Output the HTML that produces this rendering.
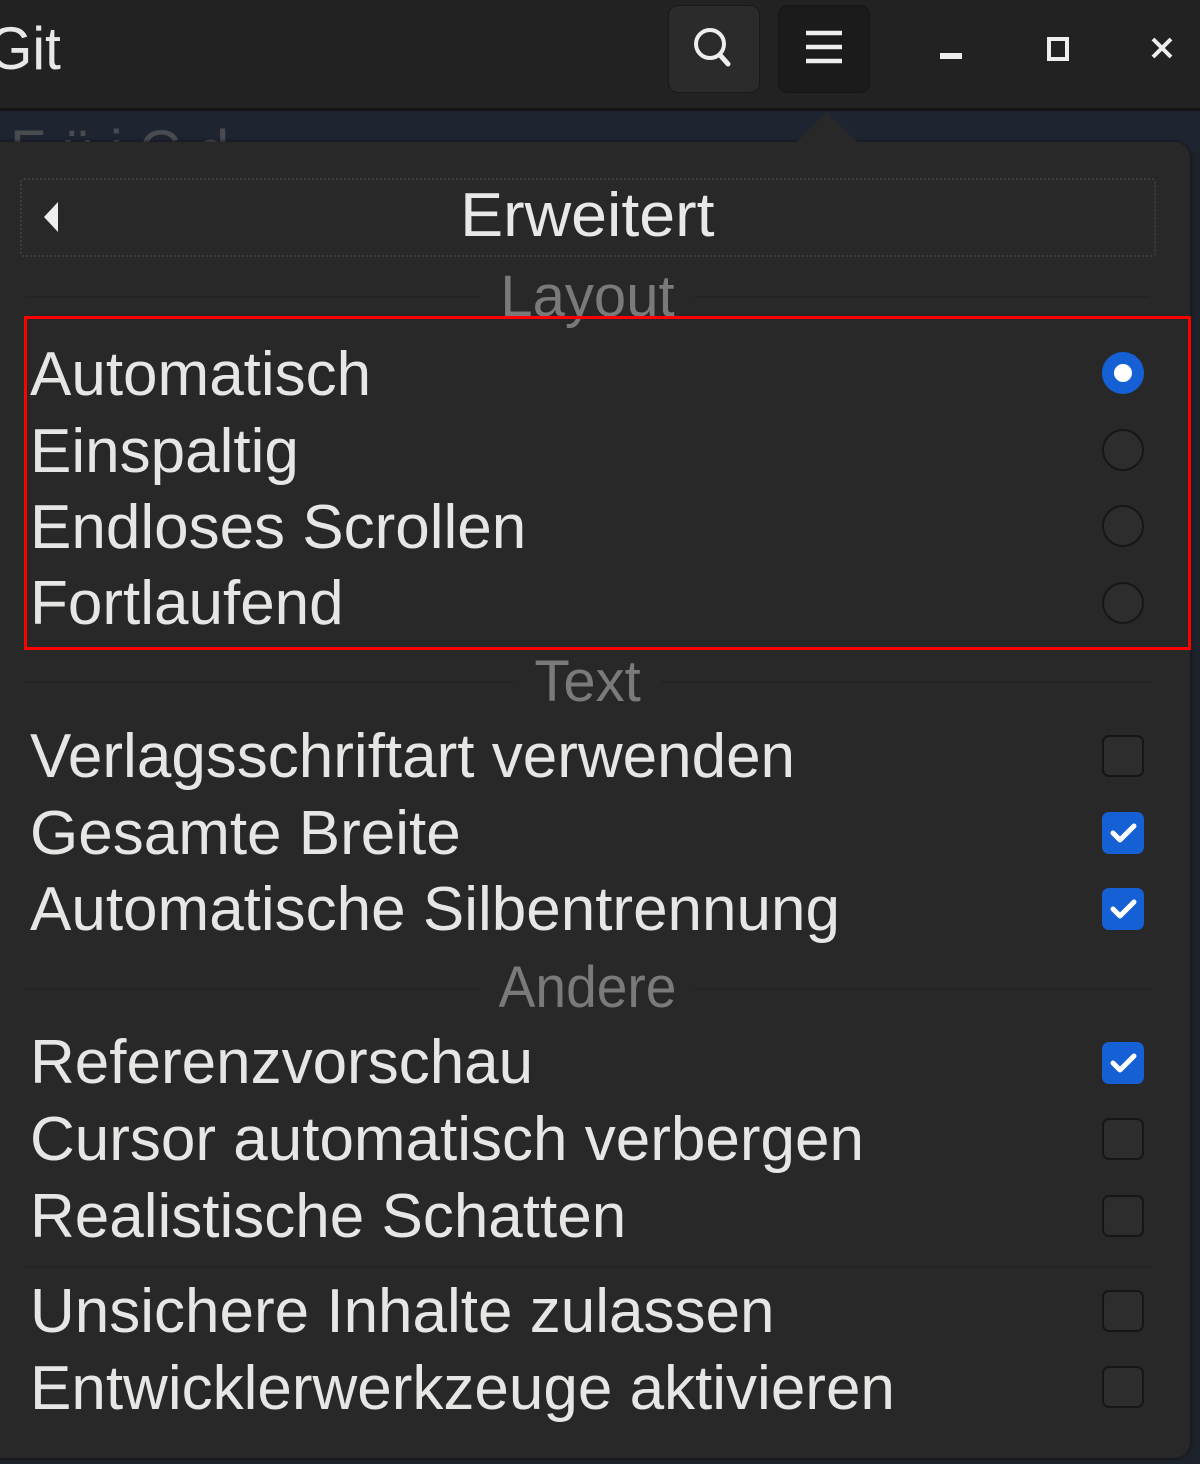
<!DOCTYPE html>
<html><head><meta charset="utf-8"><style>
html,body{margin:0;padding:0}
body{width:1200px;height:1464px;position:relative;overflow:hidden;background:#1e222b;font-family:"Liberation Sans","DejaVu Sans",sans-serif;color:#e6e6e4}
.tb{position:absolute;left:0;top:0;width:1200px;height:108px;background:#222222;border-bottom:3px solid #141414}
.bg2{position:absolute;left:0;top:111px;width:1200px;height:40px;background:#1f2431;overflow:hidden}
.pop{position:absolute;left:0;top:142px;width:1190px;height:1316px;background:#282828;border-radius:0 16px 16px 0;box-shadow:0 0 4px #111}
.arrow{position:absolute;left:795px;top:112px;width:0;height:0;border-left:32px solid transparent;border-right:32px solid transparent;border-bottom:32px solid #282828}
.lbl{position:absolute;left:30px;font-size:62px;line-height:70px;white-space:nowrap}
.sec{position:absolute;left:0;width:1175px;text-align:center;font-size:58px;line-height:70px;color:#7a7a7a}
.sec span{display:inline-block}
.line{position:absolute;left:25px;width:1125px;height:2px;background:#232323}
.rad{position:absolute;left:1102px;width:38px;height:38px;border-radius:50%;border:2px solid #161616;background:#2d2d2d}
.chk{position:absolute;left:1102px;width:38px;height:38px;border-radius:7px;border:2px solid #161616;background:#2d2d2d}
.on{background:#1560d4;border-color:#1560d4}
.btn{position:absolute;top:5px;width:90px;height:86px;border-radius:10px}
</style></head><body>
<div class="tb"></div>
<div style="position:absolute;left:-12px;top:14px;font-size:60px;color:#e8e8e8;transform:scaleX(0.95);transform-origin:left">Git</div>
<div class="btn" style="left:668px;background:#2b2b2b;border:1px solid #1a1a1a"></div>
<div class="btn" style="left:778px;background:#1b1b1b;border:1px solid #151515"></div>
<svg style="position:absolute;left:690px;top:24px" width="44" height="46"><circle cx="20" cy="20" r="14" fill="none" stroke="#eee" stroke-width="4"/><path d="M30 31 L38 40" stroke="#eee" stroke-width="5" stroke-linecap="round"/></svg>
<svg style="position:absolute;left:804px;top:28px" width="40" height="40"><path d="M2 5H38M2 19H38M2 33H38" stroke="#eee" stroke-width="4.5"/></svg>
<div style="position:absolute;left:940px;top:53px;width:22px;height:6px;background:#eee"></div>
<div style="position:absolute;left:1047px;top:37px;width:14px;height:16px;border:4px solid #eee;box-sizing:content-box"></div>
<svg style="position:absolute;left:1150px;top:36px" width="24" height="24"><path d="M3 3L21 21M21 3L3 21" stroke="#eee" stroke-width="4"/></svg>
<div class="bg2"><div style="position:absolute;left:10px;top:7px;font-size:58px;color:#666;opacity:.6;white-space:nowrap">F ü i C d</div></div>
<div class="pop"></div>
<div class="arrow"></div>
<div style="position:absolute;left:20px;top:178px;width:1132px;height:75px;border:2px dotted #3c3c3c;border-radius:4px"></div>
<svg style="position:absolute;left:40px;top:200px" width="20" height="34"><path d="M18 2L4 17L18 32Z" fill="#eee"/></svg>
<div class="sec" style="top:181px;color:#e8e8e8;font-size:62px"><span style="transform:scaleX(1.04)">Erweitert</span></div>
<div class="line" style="top:296px"></div>
<div class="sec" style="top:262px;"><span style="background:#282828;padding:0 20px">Layout</span></div>
<div class="lbl" style="top:340px">Automatisch</div>
<div class="lbl" style="top:417px">Einspaltig</div>
<div class="lbl" style="top:493px">Endloses Scrollen</div>
<div class="lbl" style="top:569px">Fortlaufend</div>
<div class="rad on" style="top:352px"><div style="position:absolute;left:10px;top:10px;width:18px;height:18px;border-radius:50%;background:#fff"></div></div>
<div class="rad" style="top:429px"></div>
<div class="rad" style="top:505px"></div>
<div class="rad" style="top:582px"></div>
<div class="line" style="top:681px"></div>
<div class="sec" style="top:647px"><span style="background:#282828;padding:0 20px">Text</span></div>
<div style="position:absolute;left:24px;top:316px;width:1161px;height:328px;border:3px solid #f00"></div>
<div class="lbl" style="top:722px">Verlagsschriftart verwenden</div>
<div class="lbl" style="top:799px">Gesamte Breite</div>
<div class="lbl" style="top:875px">Automatische Silbentrennung</div>
<div class="chk" style="top:735px"></div>
<div class="chk on" style="top:812px"><svg width="38" height="38"><path d="M9 19L16 26L30 12" fill="none" stroke="#fff" stroke-width="5" stroke-linecap="round" stroke-linejoin="round"/></svg></div>
<div class="chk on" style="top:888px"><svg width="38" height="38"><path d="M9 19L16 26L30 12" fill="none" stroke="#fff" stroke-width="5" stroke-linecap="round" stroke-linejoin="round"/></svg></div>
<div class="line" style="top:988px"></div>
<div class="sec" style="top:953px"><span style="background:#282828;padding:0 20px;transform:scaleX(0.95)">Andere</span></div>
<div class="lbl" style="top:1028px">Referenzvorschau</div>
<div class="lbl" style="top:1105px">Cursor automatisch verbergen</div>
<div class="lbl" style="top:1182px">Realistische Schatten</div>
<div class="chk on" style="top:1042px"><svg width="38" height="38"><path d="M9 19L16 26L30 12" fill="none" stroke="#fff" stroke-width="5" stroke-linecap="round" stroke-linejoin="round"/></svg></div>
<div class="chk" style="top:1118px"></div>
<div class="chk" style="top:1195px"></div>
<div class="line" style="top:1266px"></div>
<div class="lbl" style="top:1277px">Unsichere Inhalte zulassen</div>
<div class="lbl" style="top:1354px">Entwicklerwerkzeuge aktivieren</div>
<div class="chk" style="top:1290px"></div>
<div class="chk" style="top:1366px"></div>
</body></html>
